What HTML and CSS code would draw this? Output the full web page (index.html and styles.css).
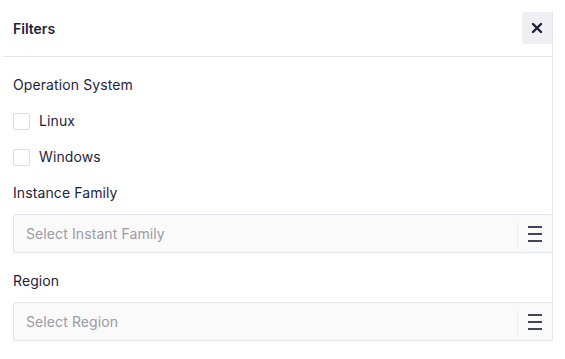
FILE: index.html
```html
<!DOCTYPE html>
<html lang="en">
<head>
    <meta charset="UTF-8">
    <meta name="viewport" content="width=device-width, initial-scale=1.0">
    <title>Filters</title>
    <link rel="stylesheet" href="styles.css">
</head>
<body>
    <div class="drawer">
        <div class="drawer-header">
            <span class="drawer-title">Filters</span>
            <button class="close-btn" aria-label="Close">
                <svg width="12" height="12" viewBox="0 0 12 12">
                    <path d="M2 2 L10 10 M10 2 L2 10" stroke="#1e1e3a" stroke-width="2.4" stroke-linecap="round"/>
                </svg>
            </button>
        </div>

        <div class="drawer-body">
            <div class="field-label">Operation System</div>
            <label class="check-row">
                <span class="check-box"></span>
                Linux
            </label>
            <label class="check-row">
                <span class="check-box"></span>
                Windows
            </label>

            <div class="field-label">Instance Family</div>
            <div class="select-box">
                <span class="placeholder">Select Instant Family</span>
                <span class="select-divider"></span>
                <span class="menu-icon"><i></i><i></i><i></i></span>
            </div>

            <div class="field-label">Region</div>
            <div class="select-box">
                <span class="placeholder">Select Region</span>
                <span class="select-divider"></span>
                <span class="menu-icon"><i></i><i></i><i></i></span>
            </div>
        </div>
    </div>
</body>
</html>
```

FILE: styles.css
```css
body {
    margin: 0;
    padding: 0;
    background-color: #fff;
    color: #1e1e3a;
    font-family: Inter, "Noto Sans", sans-serif;
    font-size: 14px;
}

.drawer {
    width: 549px;
    margin: 12px 0 9px 3px;
    border-right: 1px solid #e4e5ea;
}

.drawer-header {
    display: flex;
    justify-content: space-between;
    align-items: center;
    padding: 0 0 12px 10px;
    border-bottom: 1px solid #e4e5ea;
}

.drawer-title {
    font-weight: 600;
    font-size: 14px;
}

.close-btn {
    width: 30px;
    height: 32px;
    border: none;
    border-radius: 3px 0 0 3px;
    background-color: #efeff3;
    display: flex;
    align-items: center;
    justify-content: center;
    padding: 0;
    cursor: pointer;
}

.drawer-body {
    display: flex;
    flex-direction: column;
    padding: 18px 0 0 10px;
    letter-spacing: 0.1px;
}

.field-label {
    line-height: 20px;
    margin-bottom: 16px;
}

.check-row {
    display: flex;
    align-items: center;
    gap: 9px;
    line-height: 20px;
    margin-bottom: 16px;
}

.check-box {
    width: 15px;
    height: 15px;
    border: 1px solid #dcdde3;
    border-radius: 2px;
    background-color: #fff;
}

.field-label + .select-box {
    margin-top: -5px;
}

.select-box {
    display: flex;
    align-items: center;
    height: 37px;
    border: 1px solid #e4e5ea;
    border-right: none;
    border-radius: 3px 0 0 3px;
    background-color: #fafafb;
    padding-left: 12px;
    margin-bottom: 18px;
}

.select-box:last-child {
    margin-bottom: 0;
}

.placeholder {
    flex: 1;
    color: #9a9ba3;
}

.select-divider {
    width: 1px;
    height: 26px;
    background-color: #ededf0;
    margin-right: 10px;
}

.menu-icon {
    display: flex;
    flex-direction: column;
    gap: 5px;
    width: 14px;
    margin-right: 10px;
}

.menu-icon i {
    display: block;
    height: 2px;
    background-color: #44445e;
}
```
